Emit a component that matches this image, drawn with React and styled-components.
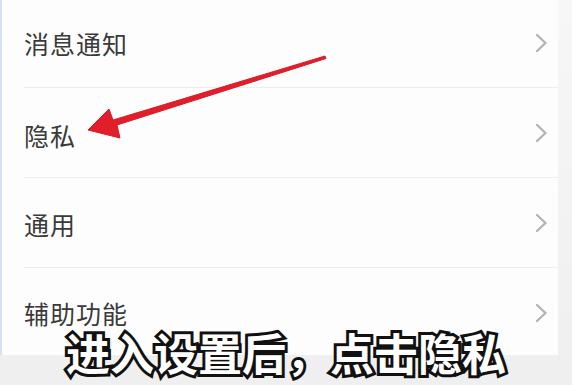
import React from "react";
import styled, { createGlobalStyle } from "styled-components";

const Global = createGlobalStyle`
  html, body { margin: 0; padding: 0; background: #f4f4f4; }
  #root { width: 572px; height: 385px; }
`;

const Page = styled.div`
  position: relative;
  width: 572px;
  height: 385px;
  overflow: hidden;
  background: linear-gradient(#f7f7f7, #efefef);
  display: flex;
  font-family: "Noto Sans CJK SC", "Noto Sans", sans-serif;
`;

const Card = styled.div`
  width: 556px;
  height: 357px;
  background: #fdfdfd;
  border-left: 2px solid #d3e3f3;
  display: flex;
  flex-direction: column;
  margin-top: -2px;
`;

const Row = styled.div`
  height: 89px;
  margin-left: 22px;
  padding-right: 10px;
  display: flex;
  align-items: center;
  justify-content: space-between;
  border-bottom: ${(p) => (p.$last ? "none" : "1px solid #ededed")};
  flex-shrink: 0;
`;

const Label = styled.span`
  font-size: 25px;
  color: #3a3a3a;
  letter-spacing: 1px;
  padding-top: ${(p) => p.$dy || 0}px;
`;

const Chevron = styled.svg`
  width: 13px;
  height: 20px;
  flex-shrink: 0;
`;

const Arrow = styled.svg`
  position: absolute;
  left: 0;
  top: 0;
  width: 572px;
  height: 385px;
  pointer-events: none;
`;

const Subtitle = styled.div`
  position: absolute;
  left: 66px;
  top: 323px;
  font-family: "Noto Sans CJK SC", sans-serif;
  font-weight: 700;
  font-size: 44px;
  line-height: 58px;
  color: #fff;
  letter-spacing: 0px;
  -webkit-text-stroke: 6px #111;
  paint-order: stroke fill;
  white-space: nowrap;
`;

const items = [
  { label: "消息通知", dy: 0 },
  { label: "隐私", dy: 4 },
  { label: "通用", dy: 2 },
  { label: "辅助功能", dy: 0 },
];

export default function App() {
  return (
    <>
      <Global />
      <Page>
        <Card>
          {items.map((it, i) => (
            <Row key={it.label} $last={i === items.length - 1}>
              <Label $dy={it.dy}>{it.label}</Label>
              <Chevron viewBox="0 0 13 20">
                <path d="M2 2 L10.5 10 L2 18" fill="none" stroke="#b3b3b3" strokeWidth="2.4" strokeLinecap="round" strokeLinejoin="round" />
              </Chevron>
            </Row>
          ))}
        </Card>
        <Arrow viewBox="0 0 572 385">
          <path
            d="M325 56 L326 58.5 L117 125 L120 138 L88 130 L109 109 L113 120 Z"
            fill="#e01f2b"
            stroke="#d81b27"
            strokeWidth="1"
            strokeLinejoin="round"
          />
        </Arrow>
        <Subtitle>进入设置后，点击隐私</Subtitle>
      </Page>
    </>
  );
}
